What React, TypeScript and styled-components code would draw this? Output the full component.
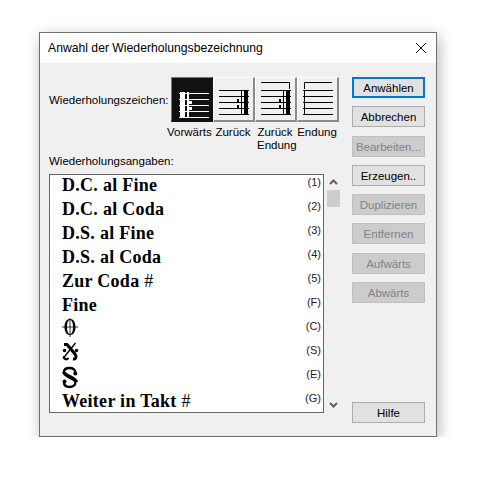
import { createGlobalStyle } from "styled-components";
import styled from "styled-components";

const GlobalStyle = createGlobalStyle`
  html, body {
    margin: 0;
    padding: 0;
    background: #ffffff;
  }
`;

const Dialog = styled.div`
  width: 398px;
  height: 405px;
  margin: 32px 0 0 39px;
  box-sizing: border-box;
  border: 1px solid #6f6f6f;
  background: #f0f0f0;
  box-shadow: 2px 4px 14px rgba(0, 0, 0, 0.28);
  font-family: "Liberation Sans", Arial, sans-serif;
  color: #000000;
  display: flex;
  flex-direction: column;
`;

const TitleBar = styled.div`
  height: 30px;
  background: #ffffff;
  display: flex;
  align-items: center;
  justify-content: space-between;
  padding: 0 9px 0 8px;
  font-size: 12.2px;
`;

const Content = styled.div`
  flex: 1;
  display: flex;
  padding: 14px 11px 13px 9px;
`;

const LeftColumn = styled.div`
  width: 303px;
  display: flex;
  flex-direction: column;
`;

const MarkRow = styled.div`
  display: flex;
  align-items: center;
  justify-content: space-between;
  padding-right: 13px;
`;

const Caption = styled.span`
  font-size: 11.5px;
`;

const MarkGroup = styled.div`
  display: flex;
`;

const MarkButton = styled.div<{ $active?: boolean }>`
  width: 42px;
  height: 45px;
  box-sizing: border-box;
  background: ${(p) => (p.$active ? "#111111" : "#f0f0f0")};
  border-style: solid;
  border-width: 1px 2px 2px 1px;
  border-color: ${(p) =>
    p.$active ? "#777777 #111111 #111111 #777777" : "#ffffff #8a8a8a #8a8a8a #ffffff"};
  color: ${(p) => (p.$active ? "#ffffff" : "#000000")};
  svg {
    display: block;
    margin: -1px 0 0 -1px;
  }
`;

const MarkLabels = styled.div`
  display: flex;
  margin: 4px 0 0 118px;
  height: 29px;
`;

const MarkLabel = styled.div<{ $w: number }>`
  width: ${(p) => p.$w}px;
  flex: none;
  text-align: center;
  font-size: 11.5px;
  line-height: 13px;
`;

const ListCaption = styled(Caption)`
  line-height: 13px;
  margin-bottom: 6px;
`;

const ListArea = styled.div`
  display: flex;
`;

const List = styled.div`
  width: 275px;
  height: 239px;
  box-sizing: border-box;
  border: 1px solid #666666;
  background: #ffffff;
  overflow: hidden;
`;

const Row = styled.div`
  height: 24px;
  display: flex;
  align-items: flex-start;
  justify-content: space-between;
  padding: 0 2px 0 12px;
`;

const RowText = styled.span`
  font-family: "Liberation Serif", "Times New Roman", serif;
  font-weight: 700;
  font-size: 18px;
  line-height: 21px;
  letter-spacing: 0.28px;
  white-space: nowrap;
`;

const Hash = styled.span`
  font-weight: 400;
`;

const RowKey = styled.span`
  font-size: 11px;
  line-height: 15px;
  color: #1a1a2a;
`;

const Scrollbar = styled.div`
  width: 17px;
  height: 239px;
  display: flex;
  flex-direction: column;
  align-items: center;
  padding-left: 1px;
  box-sizing: border-box;
`;

const ScrollArrow = styled.div`
  height: 16px;
  width: 100%;
  display: flex;
  align-items: center;
  justify-content: center;
`;

const ScrollThumb = styled.div`
  width: 13px;
  height: 17px;
  background: #cdcdcd;
`;

const ScrollTrack = styled.div`
  flex: 1;
`;

const ButtonColumn = styled.div`
  flex: 1;
  display: flex;
  flex-direction: column;
  align-items: flex-end;
`;

const DialogButton = styled.div<{ $primary?: boolean; $disabled?: boolean; $gap: number }>`
  width: 73px;
  height: 21px;
  box-sizing: border-box;
  flex: none;
  display: flex;
  align-items: center;
  justify-content: center;
  margin-top: ${(p) => p.$gap}px;
  font-size: 11.5px;
  background: ${(p) => (p.$disabled ? "#cccccc" : "#e1e1e1")};
  color: ${(p) => (p.$disabled ? "#838383" : "#000000")};
  border: ${(p) =>
    p.$primary ? "2px solid #0078d7" : p.$disabled ? "1px solid #bfbfbf" : "1px solid #adadad"};
`;

const Spacer = styled.div`
  flex: 1;
`;

const Glyph = styled.svg`
  display: block;
  margin-left: -1px;
  margin-top: -1px;
`;

const CloseIcon = () => (
  <svg width="12" height="12" viewBox="0 0 12 12" fill="none" stroke="#111111" strokeWidth="1">
    <path d="M1 1 L11 11 M11 1 L1 11" />
  </svg>
);

const Chevron = ({ up }: { up?: boolean }) => (
  <svg width="9" height="6" viewBox="0 0 9 6" fill="none" stroke="#606060" strokeWidth="2">
    <path d={up ? "M1 5 L4.5 1.5 L8 5" : "M1 1 L4.5 4.5 L8 1"} />
  </svg>
);

const StaffLines = ({ x1, x2, top }: { x1: number; x2: number; top: number }) => (
  <>
    {[0, 6, 12, 18, 24].map((dy) => (
      <rect key={dy} x={x1} y={top + dy} width={x2 - x1} height="1" fill="currentColor" />
    ))}
  </>
);

const ForwardMark = () => (
  <svg width="42" height="45" viewBox="0 0 42 45">
    <StaffLines x1={8} x2={38} top={16} />
    <rect x="9" y="15" width="5" height="26" fill="currentColor" />
    <rect x="16" y="15" width="2" height="26" fill="currentColor" />
    <rect x="18" y="24" width="3" height="3" fill="currentColor" />
    <rect x="18" y="30" width="3" height="3" fill="currentColor" />
  </svg>
);

const BackMark = ({ bracket }: { bracket?: boolean }) => (
  <svg width="42" height="45" viewBox="0 0 42 45">
    <StaffLines x1={6} x2={36} top={13} />
    <rect x="28" y="13" width="1" height="25" fill="currentColor" />
    <rect x="31" y="13" width="4" height="25" fill="currentColor" />
    <rect x="24" y="22" width="2" height="3" fill="currentColor" />
    <rect x="24" y="28" width="2" height="3" fill="currentColor" />
    {bracket && <path d="M6 5.5 H34.5 V12" fill="none" stroke="currentColor" />}
  </svg>
);

const EndingMark = () => (
  <svg width="42" height="45" viewBox="0 0 42 45">
    <StaffLines x1={6} x2={36} top={13} />
    <rect x="7" y="13" width="1" height="25" fill="currentColor" />
    <path d="M7.5 12 V5.5 H35" fill="none" stroke="currentColor" />
  </svg>
);

const CodaSign = () => (
  <Glyph width="18" height="22" viewBox="0 0 18 22">
    <path
      fillRule="evenodd"
      d="M9 1 C12.5 1 14.5 4.5 14.5 9 C14.5 13.5 12.5 17 9 17 C5.5 17 3.5 13.5 3.5 9 C3.5 4.5 5.5 1 9 1 Z M9 2 C7 2 6 5 6 9 C6 13 7 16 9 16 C11 16 12 13 12 9 C12 5 11 2 9 2 Z"
      fill="#000"
    />
    <path d="M9 0 V19 M1 9 H17" stroke="#000" strokeWidth="0.8" />
  </Glyph>
);

const SlashedSegno = () => (
  <Glyph width="19" height="22" viewBox="0 0 19 22">
    <path d="M3 2.5 L6 2.5 L14 12 C16 15 15 17.5 12 17" fill="none" stroke="#000" strokeWidth="3" />
    <path d="M14.5 1 L2 16.5" stroke="#000" strokeWidth="1.4" />
    <path d="M3 14 C3 17 5 18.5 7.5 16" fill="none" stroke="#000" strokeWidth="2.2" />
    <circle cx="3.5" cy="8.5" r="1.7" fill="#000" />
    <circle cx="15.5" cy="8.5" r="1.7" fill="#000" />
  </Glyph>
);

const EndSign = () => (
  <Glyph width="18" height="23" viewBox="0 0 18 23">
    <path
      d="M14.5 7 C14.5 3.5 12 2 8.5 2 C5 2 3 3.5 3 6 M14.5 16 C14.5 19 12 21 8.5 21 C5 21 3 19 3 16"
      fill="none"
      stroke="#000"
      strokeWidth="2.4"
    />
    <path d="M3 6 C3 10 15 12 15 16" fill="none" stroke="#000" strokeWidth="3.8" />
    <circle cx="14.3" cy="7.5" r="2" fill="#000" />
    <circle cx="3.5" cy="15.5" r="2" fill="#000" />
  </Glyph>
);

const rows: { label: React.ReactNode; key: string }[] = [
  { label: <RowText>D.C. al Fine</RowText>, key: "(1)" },
  { label: <RowText>D.C. al Coda</RowText>, key: "(2)" },
  { label: <RowText>D.S. al Fine</RowText>, key: "(3)" },
  { label: <RowText>D.S. al Coda</RowText>, key: "(4)" },
  { label: <RowText>Zur Coda <Hash>#</Hash></RowText>, key: "(5)" },
  { label: <RowText>Fine</RowText>, key: "(F)" },
  { label: <CodaSign />, key: "(C)" },
  { label: <SlashedSegno />, key: "(S)" },
  { label: <EndSign />, key: "(E)" },
  { label: <RowText>Weiter in Takt <Hash>#</Hash></RowText>, key: "(G)" },
];

const labels = [
  { w: 42, text: "Vorwärts" },
  { w: 48, text: "Zurück" },
  { w: 36, text: "Zurück Endung" },
  { w: 48, text: "Endung" },
];

const buttons = [
  { text: "Anwählen", primary: true, gap: 0 },
  { text: "Abbrechen", gap: 8 },
  { text: "Bearbeiten...", disabled: true, gap: 9 },
  { text: "Erzeugen..", gap: 8 },
  { text: "Duplizieren", disabled: true, gap: 8 },
  { text: "Entfernen", disabled: true, gap: 8 },
  { text: "Aufwärts", disabled: true, gap: 9 },
  { text: "Abwärts", disabled: true, gap: 8 },
];

const App = () => {
  return (
    <>
      <GlobalStyle />
      <Dialog>
        <TitleBar>
          <span>Anwahl der Wiederholungsbezeichnung</span>
          <CloseIcon />
        </TitleBar>
        <Content>
          <LeftColumn>
            <MarkRow>
              <Caption>Wiederholungszeichen:</Caption>
              <MarkGroup>
                <MarkButton $active><ForwardMark /></MarkButton>
                <MarkButton><BackMark /></MarkButton>
                <MarkButton><BackMark bracket /></MarkButton>
                <MarkButton><EndingMark /></MarkButton>
              </MarkGroup>
            </MarkRow>
            <MarkLabels>
              {labels.map((l) => (
                <MarkLabel key={l.text} $w={l.w}>{l.text}</MarkLabel>
              ))}
            </MarkLabels>
            <ListCaption>Wiederholungsangaben:</ListCaption>
            <ListArea>
              <List>
                {rows.map((r) => (
                  <Row key={r.key}>
                    {r.label}
                    <RowKey>{r.key}</RowKey>
                  </Row>
                ))}
              </List>
              <Scrollbar>
                <ScrollArrow><Chevron up /></ScrollArrow>
                <ScrollThumb />
                <ScrollTrack />
                <ScrollArrow><Chevron /></ScrollArrow>
              </Scrollbar>
            </ListArea>
          </LeftColumn>
          <ButtonColumn>
            {buttons.map((b) => (
              <DialogButton key={b.text} $primary={b.primary} $disabled={b.disabled} $gap={b.gap}>
                {b.text}
              </DialogButton>
            ))}
            <Spacer />
            <DialogButton $gap={0}>Hilfe</DialogButton>
          </ButtonColumn>
        </Content>
      </Dialog>
    </>
  );
};

export default App;
